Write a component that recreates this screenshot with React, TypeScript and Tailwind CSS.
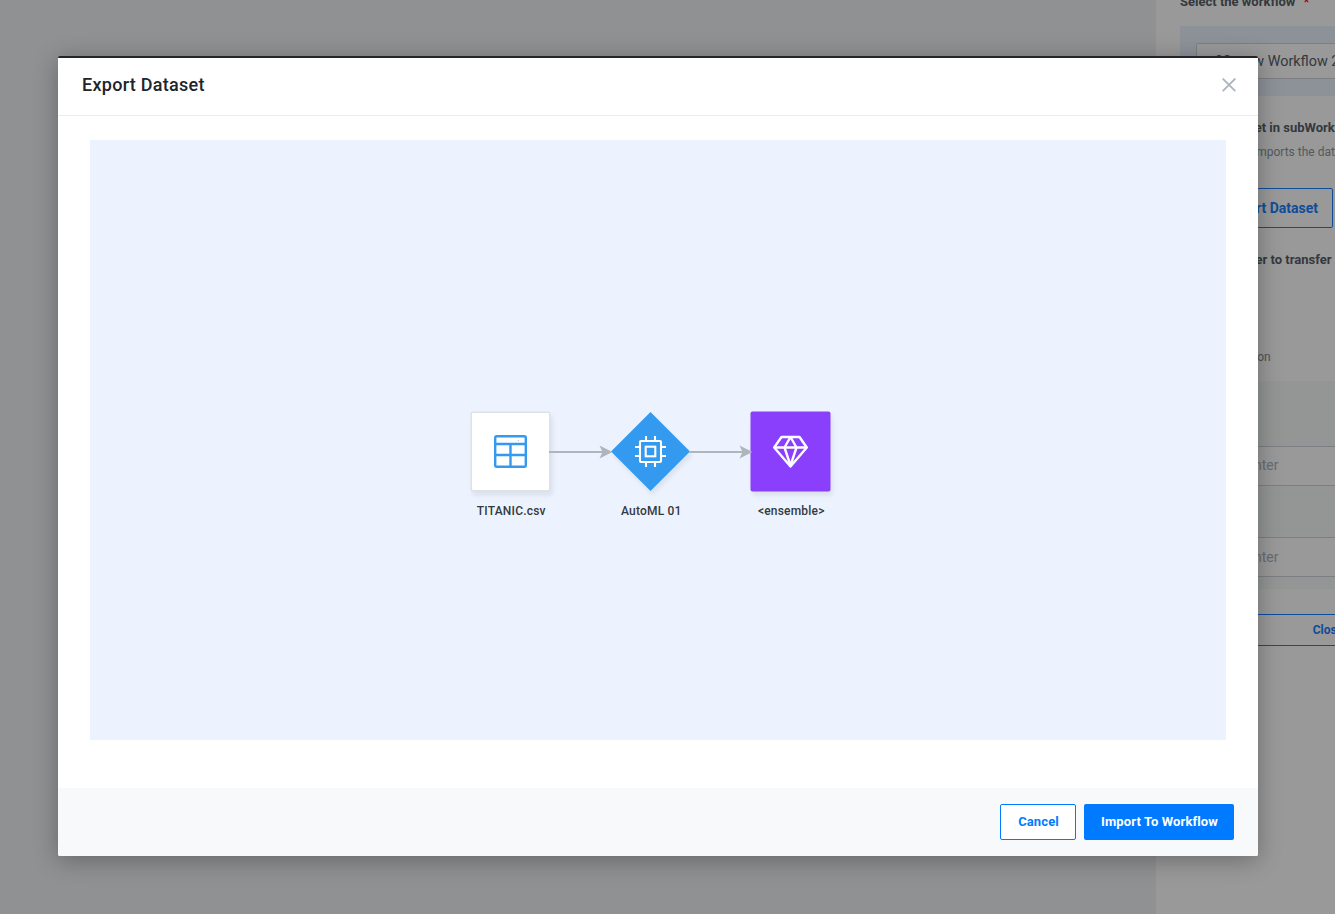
import React from "react";

function Arrow() {
  return (
    <svg width="63" height="14" viewBox="0 0 63 14" className="block overflow-visible">
      <path d="M0 7H55" stroke="#adb5bd" strokeWidth="2" />
      <path d="M50.5 0.5L63.5 7L50.5 13.5L53.5 7Z" fill="#adb5bd" />
    </svg>
  );
}

function TableIcon() {
  return (
    <svg width="35" height="35" viewBox="-0.5 -0.5 35 35" fill="none" stroke="#339af0" strokeWidth="2.4">
      <rect x="1.7" y="1.7" width="30.6" height="30.6" rx="1.5" />
      <path d="M1.7 9.5H32.3M1.7 20.5H32.3M17 9.5V32.3" />
      <path d="M24.4 6H25.2" stroke="#868e96" strokeWidth="0.8" />
    </svg>
  );
}

function ChipIcon() {
  return (
    <svg width="33" height="33" viewBox="-0.5 -0.5 33 33" fill="none" stroke="white" strokeWidth="2.1">
      <rect x="5.5" y="5.5" width="21" height="21" rx="1" />
      <rect x="11.2" y="11.2" width="9.6" height="9.6" />
      <path d="M11.5 0.5V5M20.5 0.5V5M11.5 27V31.5M20.5 27V31.5M0.5 11.5H5M0.5 20.5H5M27 11.5H31.5M27 20.5H31.5" />
    </svg>
  );
}

function DiamondIcon() {
  return (
    <svg width="37" height="35" viewBox="-0.5 -0.5 37 35" fill="none" stroke="white" strokeWidth="2.4" strokeLinejoin="round">
      <path d="M9 2.5H27L34.3 13L18 32L1.7 13Z" />
      <path d="M1.7 13H34.3M18 2.5L12 13L18 31M18 2.5L24 13L18 31" />
    </svg>
  );
}

function Panel() {
  return (
    <aside className="h-[914px] w-[344px] shrink-0 overflow-hidden bg-white">
      <div className="flex h-[26px] items-start pl-6 text-[13px] leading-[18px] font-bold whitespace-pre text-[#586068]">
        <span className="-mt-[7px]">Select the workflow <span className="ml-[5px] text-[#f00]">*</span></span>
      </div>
      <div className="ml-6 h-[70px] bg-[#ebf3ff] pt-[17px] pl-4">
        <div className="flex h-9 w-[260px] items-center rounded-[2px] border border-[#ced4da] bg-white pt-px pl-[18px] text-[14.4px] whitespace-nowrap text-[#586068]">
          08_new Workflow 2
        </div>
      </div>
      <div className="h-[92px] pt-[22px] pl-6 whitespace-nowrap">
        <div className="pl-[2.5px] text-[13px] leading-[20px] font-bold text-[#586068]">Select dataset in subWorkflow</div>
        <div className="mt-1 pl-[35px] text-xs leading-5 text-[#8d959c]">Button imports the dataset</div>
      </div>
      <div className="ml-6 flex h-10 w-[153px] items-center justify-end rounded-[2px] border border-[#1a80ff] pr-[14px] text-sm font-bold text-[#1a80ff]">
        Export Dataset
      </div>
      <div className="h-[119px] pt-[22px] pl-[50px] text-[13px] leading-5 font-bold text-[#586068]">Parameter to transfer</div>
      <div className="h-[34px] pl-[54px] text-xs leading-5 text-[#868e96]">Description</div>
      <div className="h-[208px] bg-[#f6faf8] pt-[65px]">
        <div className="flex h-10 items-center border-y border-[#ced4da] bg-white pb-[2px] pl-[90px] text-sm text-[#adb5bd]">Enter</div>
        <div className="mt-[51px] flex h-10 items-center border-y border-[#ced4da] bg-white pl-[90px] text-sm text-[#adb5bd]">Enter</div>
      </div>
      <div className="mx-6 mt-[25px] flex h-8 items-center justify-center rounded-[2px] border border-[#1a80ff] text-xs font-bold text-[#1a80ff]">Close</div>
    </aside>
  );
}

function Node({ label, shape, icon }: { label: string; shape: React.ReactNode; icon: React.ReactNode }) {
  return (
    <div className="flex w-[81px] flex-col items-center">
      <div className="grid h-[81px] w-[81px] place-items-center">
        <svg
          width="81"
          height="81"
          viewBox="0 0 81 81"
          className="col-start-1 row-start-1 overflow-visible drop-shadow-[2px_4px_2px_rgba(0,0,0,0.07)]"
        >
          {shape}
        </svg>
        <div className="z-10 col-start-1 row-start-1">{icon}</div>
      </div>
      <div className="mt-[10px] pl-[1.5px] text-xs leading-[18px] font-medium tracking-[0.2px] whitespace-nowrap text-[#343a40]">{label}</div>
    </div>
  );
}

export default function App() {
  return (
    <div className="relative h-[914px] w-full overflow-hidden bg-[#f0f2f5] font-['Roboto',sans-serif]">
      <div className="flex h-[914px]">
        <div className="w-[1156px] shrink-0" />
        <Panel />
      </div>
      <div className="absolute inset-0 bg-black/40 pt-14 pl-[58px]">
        <section className="flex h-[800px] w-[1200px] flex-col rounded-[2px] border-t-2 border-[#212529] bg-white shadow-[0_4px_24px_rgba(0,0,0,0.3)]">
          <header className="flex h-[58px] shrink-0 items-center justify-between border-b border-[#e9ecef] pr-[22px] pb-1 pl-6">
            <h1 className="text-lg leading-6 font-medium tracking-[0.27px] text-[#212529]">Export Dataset</h1>
            <svg width="14" height="14" viewBox="0 0 14 14" stroke="#adb5bd" strokeWidth="1.8">
              <path d="M0.7 0.5L13.3 13.1M13.3 0.5L0.7 13.1" />
            </svg>
          </header>
          <main className="grow px-8 pt-6">
            <div className="flex h-[600px] items-start bg-[#ecf3ff] pt-[271px] pl-[380px]">
              <Node
                label="TITANIC.csv"
                shape={<rect x="1.25" y="1.25" width="78.5" height="78.5" rx="1.5" fill="white" stroke="#dee2e6" strokeWidth="1.5" />}
                icon={<TableIcon />}
              />
              <div className="z-10 -mx-[2px] mt-[34px]"><Arrow /></div>
              <Node
                label="AutoML 01"
                shape={<path d="M40.5 1L80 40.5L40.5 80L1 40.5Z" fill="#339af0" />}
                icon={<ChipIcon />}
              />
              <div className="z-10 -mx-[2px] mt-[34px]"><Arrow /></div>
              <Node
                label="<ensemble>"
                shape={<rect x="0.5" y="0.5" width="80" height="80" rx="2" fill="#8a3ffc" />}
                icon={<DiamondIcon />}
              />
            </div>
          </main>
          <footer className="flex h-[68px] shrink-0 items-center justify-end gap-2 rounded-b-[2px] bg-[#f8f9fb] pr-6 text-[13px] font-bold">
            <button className="h-9 w-[76px] rounded-[2px] border border-[#007bff] bg-white pl-px tracking-[0.1px] text-[#007bff]">Cancel</button>
            <button className="h-9 w-[150px] rounded-[2px] bg-[#007bff] pl-px tracking-[0.12px] text-white">Import To Workflow</button>
          </footer>
        </section>
      </div>
    </div>
  );
}
